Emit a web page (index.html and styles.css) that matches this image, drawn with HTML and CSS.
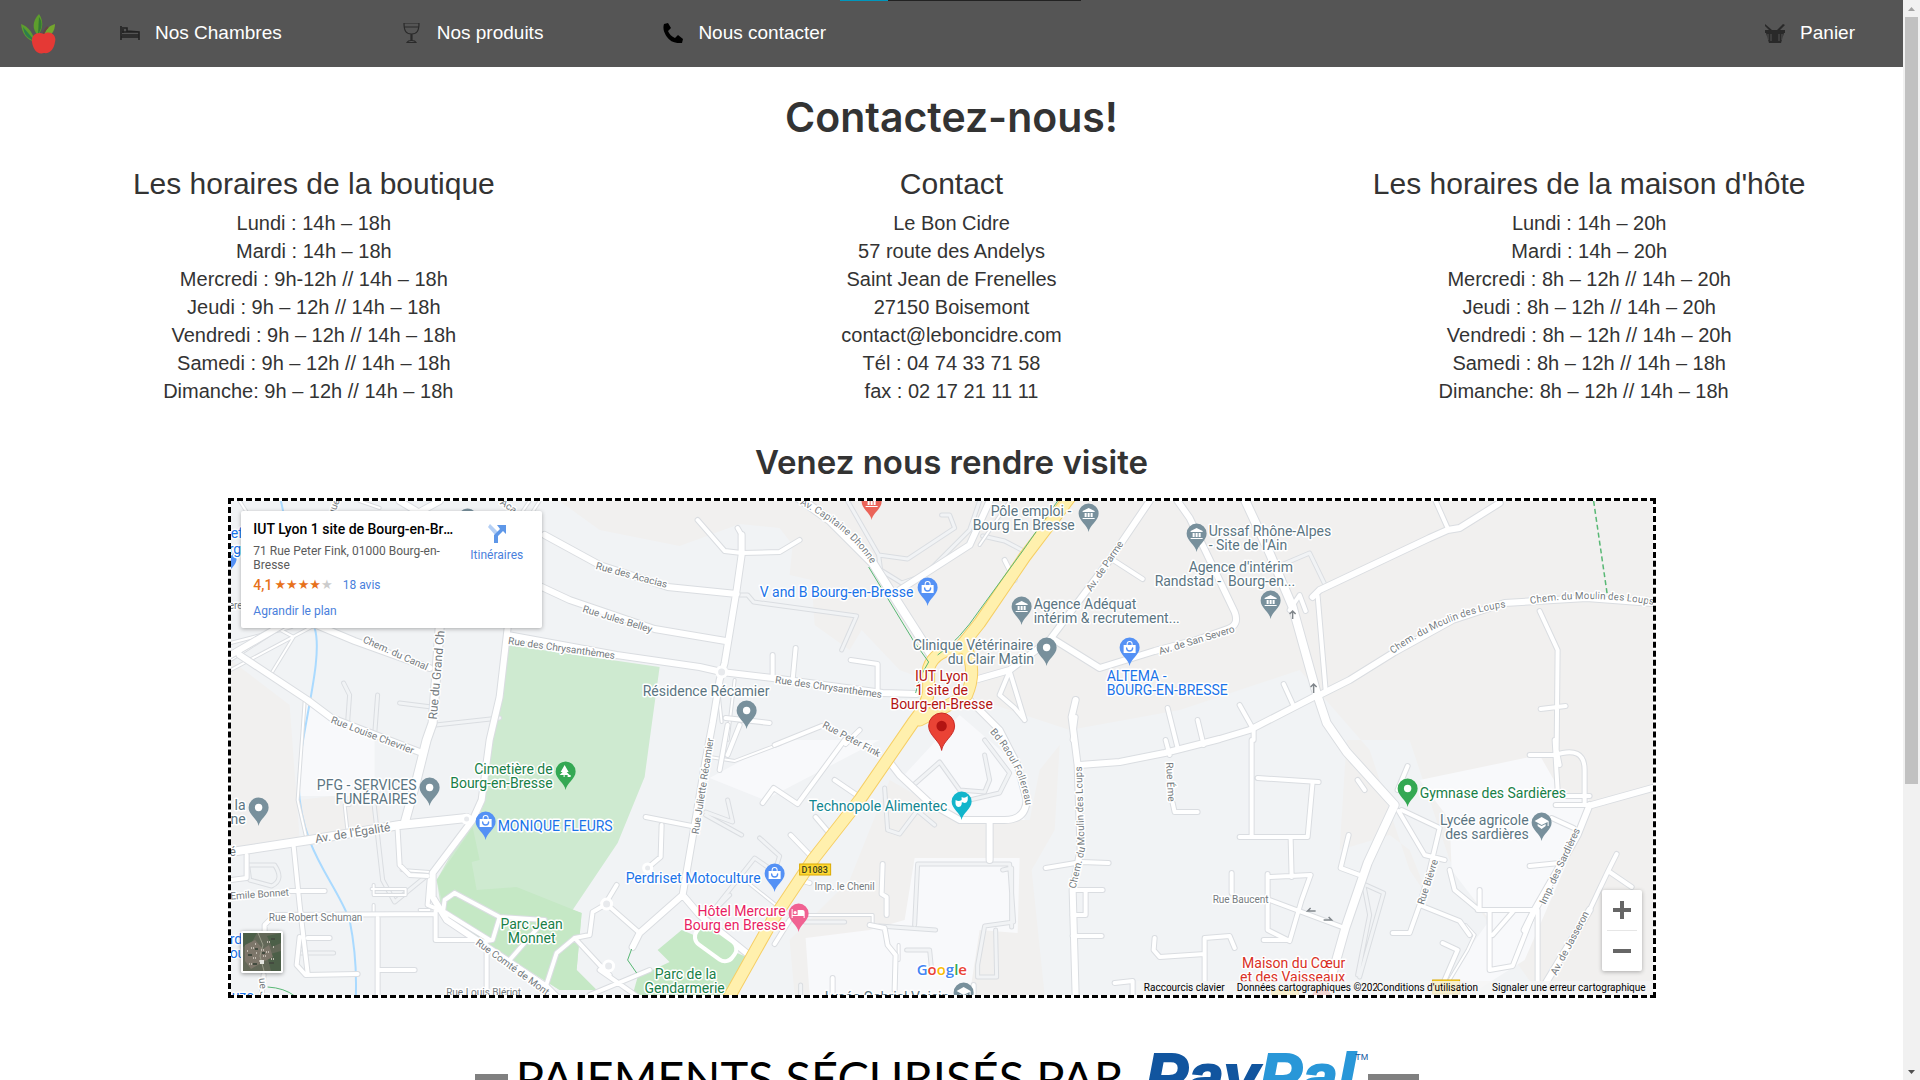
FILE: index.html
```
<!DOCTYPE html>
<html lang="fr">
<head>
<meta charset="utf-8">
<title>Le Bon Cidre - Contact</title>
<link rel="stylesheet" href="styles.css">
</head>
<body>
<div class="window">
<div class="page">
  <header class="header">
    <div class="loading"></div>
    <nav class="nav">
      <a class="logo" href="#" aria-label="Accueil">
        <svg width="36" height="42" viewBox="0 0 36 42"><path d="M19 1C12 8 12 17 18 22C24 15 23 7 19 1Z" fill="#5d9e2d"/><path d="M19 4L18 21C22 16 23 9 19 4Z" fill="#347a34"/><path d="M1 11C2 21 7 27 15 29C13 20 9 14 1 11Z" fill="#5d9e2d"/><path d="M3 14L15 28C8 26 4 22 3 14Z" fill="#2e7d4c"/><path d="M35 11C28 13 24 18 24 25C31 24 35 18 35 11Z" fill="#74a62e"/><path d="M23 22Q25 16 28 14" stroke="#644" stroke-width="2" fill="none"/><path d="M24 21C30 17 37 22 35 29C34 36 30 41 24 40C17 42 13 36 12 29C11 22 17 18 24 21Z" fill="#e53935"/></svg>
      </a>
      <a class="nav-link" href="#"><svg class="icon" viewBox="0 0 20 20" fill="none" stroke="#222" stroke-width="1.6"><path d="M1 3V17M1 14H19V17M19 14V9L7 8V5H2M2 9H19M2 12H19M3 6V10"/></svg>Nos Chambres</a>
      <a class="nav-link" href="#"><svg class="icon" viewBox="0 0 20 20" fill="none" stroke="#2a2a2a" stroke-width="1.2"><path d="M2 0H17C17 8 15 11 9.500 11S2 8 2 0ZM2 4H17M9 11V18M10 11V18M5 19.500Q6 17.500 9 17.500H10Q13 17.500 14 19.500Z"/></svg>Nos produits</a>
      <a class="nav-link" href="#"><svg class="icon" viewBox="0 0 20 20"><path d="M1 1L5 0L8 5L5 8Q7 13 12 15L15 12L20 16L19 20Q9 21 4 14Q-1 7 1 1Z"/></svg>Nous contacter</a>
      <a class="nav-link cart" href="#"><svg class="icon" viewBox="0 0 20 20" fill="#292929"><path d="M0 1L7 7H12L18 1L20 2L15 7H20V10H0V7H4L0 3Z"/><path d="M1 10H19L16 20H4Z"/><path d="M3 11V17M6 11V18M14 11V18M17 11V17" stroke="#555"/></svg>Panier</a>
    </nav>
  </header>
  <main>
    <h1 class="title">Contactez-nous!</h1>
    <div class="columns">
      <section class="column"><h3>Les horaires de la boutique</h3>
        <p>Lundi : 14h – 18h<br>Mardi : 14h – 18h<br>Mercredi : 9h-12h // 14h – 18h<br>Jeudi : 9h – 12h // 14h – 18h<br>Vendredi : 9h – 12h // 14h – 18h<br>Samedi : 9h – 12h // 14h – 18h<br>Dimanche: 9h – 12h // 14h – 18h&nbsp;&nbsp;</p></section>
      <section class="column"><h3>Contact</h3>
        <p>Le Bon Cidre<br>57 route des Andelys<br>Saint Jean de Frenelles<br>27150 Boisemont<br>contact@leboncidre.com<br>Tél : 04 74 33 71 58<br>fax : 02 17 21 11 11</p></section>
      <section class="column"><h3>Les horaires de la maison d'hôte</h3>
        <p>Lundi : 14h – 20h<br>Mardi : 14h – 20h<br>Mercredi : 8h – 12h // 14h – 20h<br>Jeudi : 8h – 12h // 14h – 20h<br>Vendredi : 8h – 12h // 14h – 20h<br>Samedi : 8h – 12h // 14h – 18h<br>Dimanche: 8h – 12h // 14h – 18h&nbsp;&nbsp;</p></section>
    </div>
    <h2 class="subtitle">Venez nous rendre visite</h2>
    <div class="map">
      <svg class="map-canvas" viewBox="231 501 1422 494" preserveAspectRatio="xMidYMid slice">
        <defs>
          <path id="drop" d="M0 0C-1-7 -10-11 -10-18.5A10 10 0 1 1 10-18.5C10-11 1-7 0 0Z"/>
          <g id="p-dot"><use href="#drop"/><circle cy="-18.500" r="3.700" fill="#fff"/></g>
          <g id="p-bag"><use href="#drop"/><path d="M-6-21H-3V-22A3 3 0 0 1 3-22V-21H6V-13H-6ZM-2-21H2V-22A2 2 0 0 0-2-22Z" fill="#fff"/><path d="M-3-18A3 3 0 0 0 3-18" fill="none" stroke="#5491f5" stroke-width="1.400"/></g>
          <g id="p-inst"><use href="#drop"/><path d="M-6-21L0-24L6-21V-20H-6ZM-4-19H-2V-15H-4ZM-1-19H1V-15H-1ZM2-19H4V-15H2ZM-6-14H6V-13H-6Z" fill="#fff"/></g>
          <g id="p-tree"><use href="#drop"/><path d="M-1-25L3-18H1L4-15H-1V-13H-2V-15H-6L-3-18H-5ZM2-15H5V-13H2Z" fill="#fff"/></g>
          <g id="p-bed"><use href="#drop"/><path d="M-7-23H-6V-17H-1V-22H4Q6-22 6-20V-14H5V-16H-6V-14H-7Z" fill="#fff"/><circle cx="-3.500" cy="-19.500" r="1.500" fill="#fff"/></g>
          <g id="p-mask"><use href="#drop"/><path d="M-6-20Q-3-18 0-20Q1-13-3-13T-6-20ZM0-23Q3-21 6-24Q7-17 3-17L0-18Z" fill="#fff"/></g>
          <g id="p-grad"><use href="#drop"/><path d="M-7-20L0-24L7-20V-15H6V-19L0-16ZM-4-17L0-15L4-17V-15L0-12L-4-15Z" fill="#fff"/></g>
          <g id="r-dim">
            <path d="M848 501L879 555L908 559L955 528L950 515H942M879 555L881 570L902 583L925 575L970 530L980 501M983 536L1005 541L1024 551M737 595L748 595L754 602L857 616L842 650M1277 567L1310 553L1326 586M706 812L733 822L728 800M706 815L742 835M760 838L780 856L775 872L755 858L710 915L730 895M885 788L888 830L900 834L918 810M915 784L940 762L960 790L985 792L990 780L985 755M985 740L1010 773L1000 793L970 800M917 810L935 825M915 925L918 864H1010L1014 922L985 926L978 965V977H997L996 930M880 926L936 930M805 922H845M907 950H930L932 970M1003 870L1012 868L1012 927M801 985V995M1364 884L1384 893L1360 977M1358 975L1370 915L1364 884"/>
            <path d="M344 683L350 695L348 722M378 695L375 735M400 703L432 707M436 725L500 718M300 953H334M248 865H275Q285 880 272 886L250 880ZM374 800L383 880L395 902L428 875"/>
          </g>
          <g id="r-thin">
            <path d="M240 501L265 540M231 660L300 615M231 670L325 620M231 643L292 627M281 630L294 637L272 673M305 702L298 800L306 835M350 805H345L348 832M320 513L350 527M360 501L380 508M530 501L510 530M540 501L520 532M718 685L722 722M735 680L728 740M1010 501L980 545M780 908L745 880M805 915H873V925M899 945V960M710 757L735 761L780 744M402 870L430 872V875"/>
            <path d="M374 905V915M372 889H406V895H374V885M420 910L430 910M1466 925L1475 935L1468 950L1450 980"/>
          </g>
          <g id="r-small">
            <path d="M698 520L725 551L742 553L780 552L800 540M738 528L742 535M773 678V655M793 680L796 648M851 660L878 664V691M726 718L770 723M728 725L720 770M740 725L728 755M822 726L775 745M846 744L860 730M763 803L774 788L798 804L845 740M835 780L857 795M816 817L833 837M791 835L817 862M646 817L692 826M662 825L661 857L648 868M1015 580L1005 560M1112 559L1143 579M1010 671L1000 695L1015 708L1025 720M1010 671L1025 720M1076 717L1073 740M1168 708L1178 748M1198 720L1204 745M1284 684L1294 706M1240 705L1254 730V740"/>
            <path d="M1166 740L1170 755M1252 740V780V837M1258 778L1319 782M1313 782L1308 837H1240M1291 838L1292 877M1268 874V930L1290 941L1302 900L1311 875L1270 877M1264 940H1290M1232 873V893M1270 900L1345 928M1349 835L1341 868L1360 875M1408 766L1398 790M1365 790L1358 780M1173 803L1175 812H1198M1046 868L1082 862L1109 863M1073 890H1103M1086 890V915H1073M1073 936H1102M1205 995V938L1230 936L1235 948M1155 938L1154 950L1160 957L1205 954M1115 983L1133 981V995M974 985L974 1000"/>
            <path d="M1399 811L1425 855L1445 860M1402 810L1440 828L1430 870L1420 905L1410 933H1393M1420 905L1460 921L1470 935M1530 755H1555Q1585 745 1585 770V805M1555 740L1558 790M1566 796H1590M1556 805H1592M1590 805L1578 835M1552 818L1574 828M1530 866L1560 863M1450 870L1455 890L1478 909M1480 890L1480 908M1478 910H1538V995M1490 910V970L1513 966L1535 910M1493 935L1513 912M1617 854L1608 872L1590 910M1610 872L1632 887M1443 943L1458 950L1445 980M1540 611L1558 650L1557 750M1541 709L1566 706M1436 501L1448 528M1306 611L1300 595L1290 610M1318 596L1326 690M1557 750L1560 765"/>
            <path d="M247 855V878L231 880M291 891H325M294 846L300 905L308 973M308 938H330M300 937L297 965L306 975L358 974M378 918V995M380 970H415M436 910V940H480M487 945V995M398 830L400 865L410 875L428 876M265 940V925L275 915L436 914M264 975L262 995M430 880L428 905L445 912L490 940M455 893L445 900L443 915M455 893L500 917L493 940L480 942M500 917L545 920L510 960M545 990L557 953L575 938L600 965L610 975M575 938L590 935L593 912L605 905M617 885L608 900M600 970L640 998M590 995L650 970M640 933L608 905M870 925L885 928L888 945L896 955L895 990M883 864L882 894L887 897V915M810 883L800 880M775 944L790 920M833 978V995"/>
          </g>
          <g id="r-main">
            <path d="M400 501L440 525M420 512L440 501M545 535L600 565L668 587L737 594M540 586L570 600L655 629L726 641M508 635L617 655L700 667L722 672L773 678L883 693L917 694M742 535V555L737 590L725 663L720 680L713 723L706 760L693 837L683 895L700 915L747 953M683 895L640 933L633 947M300 618L355 641L430 668M231 655L300 615M240 655L308 700L332 718L420 752M508 628L500 697L490 740L482 800L473 820L433 873L433 897L447 920L477 940L547 987L560 1000M1150 501L1110 560L1050 640M1178 501L1190 518L1235 612Q1240 625 1228 629L1197 640L1155 651L1100 668L1055 640M1050 640L1010 670L975 680M990 501L970 545L900 590M1320 695L1350 680L1395 652L1453 620L1505 603L1587 598L1653 603M1430 538L1320 590L1313 597M1430 538L1448 530L1460 528L1500 503"/>
            <path d="M970 700L1000 730L1018 765L1027 800Q1026 820 1005 820H960L930 803L900 775L890 762M1076 995L1073 890L1081 850L1078 765L1072 717L1076 700M1080 765L1120 762L1165 753L1220 739L1250 730L1318 695M990 820V860M1592 805L1653 788M1590 805L1578 835L1535 910L1525 930M1590 910L1545 985"/>
          </g>
          <g id="r-wide">
            <path d="M795 495L830 520L873 563L933 657M1243 495L1270 553L1293 607L1317 693L1327 723L1347 752L1395 805L1381 835L1368 863L1346 927L1333 973L1325 1000M440 628L437 670L433 723L427 740L417 780L405 823M225 853L310 840L400 825L467 818"/>
          </g>
          <g id="r-yellow">
            <path d="M1072 495L1025 557L980 623L960 648Q935 650 929 668V692Q927 706 913 723L860 800L813 860L773 920L728 1000M965 645Q978 670 967 695Q950 705 920 720"/>
          </g>
          <path id="t-dhonne" d="M800 504Q853 531 873 567"/>
          <path id="t-raoul" d="M990 732Q1020 765 1026 806"/>
          <path id="t-loups1" d="M1393 654Q1450 614 1508 607"/>
          <path id="t-loups2" d="M1531 604Q1590 593 1660 606"/>
          <path id="t-loups3" d="M1076 889L1085 850L1082 763"/>
        </defs>
        <rect x="231" y="501" width="1422" height="494" fill="#f1f3f5"/>
        <g fill="#f1f0ef">
          <path d="M231 501H560L600 530L680 546L740 524L780 528L793 545L790 575L812 580L815 625L850 650L862 630L900 670L980 700L1070 730L1180 710L1300 670L1370 750L1410 870L1430 900L1410 850L1390 835L1340 850L1347 740L1653 740V501Z"/>
          <path d="M231 660L290 705L300 838L231 850ZM300 800L380 790V832L306 835ZM1410 740H1653V995H1540L1480 910L1450 860ZM890 780L960 820L1030 820L1040 770L1060 745L1055 830L1032 870L1045 995H795L790 940L850 880Z"/>
        </g>
        <g fill="#f8f9fb">
          <path d="M306 700L340 722L375 740V796H300ZM710 778L780 740L880 740L765 800ZM960 715L1018 765L1025 820H960L900 780ZM915 858H1020L1018 933L980 930L970 995H810L806 938L870 930L905 920ZM1420 780L1540 755L1560 790L1590 800L1575 845L1525 960L1470 995L1440 990L1490 920L1452 870L1450 820Z"/>
        </g>
        <path d="M508 645L660 667L650 740L645 777L618 843L573 910L582 913L577 970L597 990H560L443 917L437 880L467 827L483 807L493 740Z" fill="#ceead0"/>
        <path d="M437 880L473 827L480 860L472 862L477 890L517 887L582 913L577 970L597 990H560L447 918Z" fill="#c5e8c5"/>
        <path d="M658 950L682 930L747 957L725 995H633L638 977L670 962Z" fill="#c5e8c5"/>
        <path d="M280 495C290 540 300 600 315 628C325 660 298 740 299 785C301 850 335 880 350 920Q358 960 356 1000" fill="none" stroke="#aadaff" stroke-width="2"/>
        <use href="#r-dim" class="case w5"/><use href="#r-dim" class="dim w3"/>
        <use href="#r-thin" class="case w4"/><use href="#r-thin" class="road w2"/>
        <use href="#r-small" class="case w6"/><use href="#r-main" class="case w8"/><use href="#r-wide" class="case w10"/>
        <use href="#r-small" class="road w4"/><use href="#r-main" class="road w6"/><use href="#r-wide" class="road w8"/>
        <use href="#r-yellow" class="gold w13"/><use href="#r-yellow" class="yellow w11"/>
        <g class="ring"><circle cx="722" cy="672" r="5"/><circle cx="467" cy="819" r="4"/><circle cx="648" cy="868" r="4"/><circle cx="607" cy="904" r="5"/><circle cx="609" cy="966" r="5"/></g>
        <rect class="loop" x="694" y="932" width="44" height="22" rx="9" transform="rotate(36 716 943)"/>
        <path d="M869 567L914 641L929 662L920 678L916 693M938 655Q960 640 980 610L1023 551L1058 501M632 949L628 960L637 973M268 987Q285 988 295 996" fill="none" stroke="#58b874"/>
        <path d="M1594 501L1608 597" fill="none" stroke="#58b874" stroke-width="1.500" stroke-dasharray="5 3"/>
        <g stroke="#80868b" stroke-width="1.500" fill="none"><path d="M1293 619V611M1290 614L1293 611L1296 614M1314 693V684M1311 687L1314 684L1317 687M1316 911H1308L1311 908M1324 920H1332L1329 917"/></g>
        <g fill="#fdd835" stroke="#dba900"><rect x="800" y="864" width="31" height="11"/><rect x="1433" y="980" width="27" height="14"/><rect x="1272" y="990" width="27" height="14"/></g>
        <g class="street">
          <text transform="translate(632 575) rotate(15)">Rue des Acacias</text><text transform="translate(618 619) rotate(17)">Rue Jules Belley</text>
          <text transform="translate(562 648) rotate(8)">Rue des Chrysanthèmes</text><text transform="translate(829 687) rotate(8)">Rue des Chrysanthèmes</text>
          <text transform="translate(396 653) rotate(24)">Chem. du Canal</text><text transform="translate(373 735) rotate(21)">Rue Louise Chevrier</text>
          <text x="316" y="917">Rue Robert Schuman</text><text transform="translate(260 894) rotate(-4)">Emile Bonnet</text><text x="484" y="992">Rue Louis Blériot</text>
          <text transform="translate(513 967) rotate(36)">Rue Comté de Mont</text><text transform="translate(703 786) rotate(-81)">Rue Juliette Récamier</text>
          <text transform="translate(852 739) rotate(28)">Rue Peter Fink</text><text x="845" y="886">Imp. le Chenil</text>
          <text transform="translate(1105 566) rotate(-56)">Av. de Parme</text><text transform="translate(1197 640) rotate(-17)">Av. de San Severo</text>
          <text transform="translate(1171 782) rotate(87)">Rue Éme</text><text x="1241" y="899">Rue Baucent</text>
          <text transform="translate(1428 882) rotate(-72)">Rue Bièvre</text><text transform="translate(1560 866) rotate(-65)">Imp. des Sardières</text>
          <text transform="translate(1570 943) rotate(-62)">Av. de Jasseron</text><text transform="translate(509 506) rotate(36)">Aca</text><text transform="translate(334 507) rotate(-70)">que</text>
          <text x="236" y="605">ere</text><text transform="translate(264 990) rotate(85)">ue Je</text>
          <text class="large" transform="translate(353 833) rotate(-9)">Av. de l'Égalité</text><text class="large" transform="translate(437 675) rotate(-85)">Rue du Grand Ch</text><text class="large" x="233" y="852">é</text>
        </g>
        <g class="street curved">
          <text><textPath href="#t-dhonne">Av. Capitaine Dhonne</textPath></text><text><textPath href="#t-raoul">Bd Raoul Follereau</textPath></text>
          <text><textPath href="#t-loups1">Chem. du Moulin des Loups</textPath></text><text><textPath href="#t-loups2">Chem. du Moulin des Loups</textPath></text><text><textPath href="#t-loups3">Chem. du Moulin des Loups</textPath></text>
        </g>
        <text class="shield" x="815" y="873">D1083</text>
        <g fill="#78909c">
          <use href="#p-inst" x="1089" y="532"/><use href="#p-inst" x="1197" y="552"/><use href="#p-inst" x="1271" y="619"/><use href="#p-inst" x="1022" y="625"/>
          <use href="#p-dot" x="1047" y="666"/><use href="#p-dot" x="747" y="729"/><use href="#p-dot" x="430" y="806"/><use href="#p-dot" x="259" y="826"/><use href="#p-dot" x="468" y="537"/>
          <use href="#p-grad" x="1542" y="841"/><use href="#p-grad" x="964" y="1011"/>
        </g>
        <g fill="#5491f5"><use href="#p-bag" x="928" y="606"/><use href="#p-bag" x="1130" y="666"/><use href="#p-bag" x="486" y="840"/><use href="#p-bag" x="775" y="892"/><use href="#p-dot" x="227" y="577"/></g>
        <g fill="#34a853"><use href="#p-tree" x="566" y="790"/><use href="#p-dot" x="1408" y="807"/></g>
        <use href="#p-inst" x="872" y="520" fill="#eb6459"/><use href="#p-bed" x="799" y="932" fill="#f06292"/><use href="#p-mask" x="962" y="820" fill="#12b5cb"/><circle cx="1322" cy="998" r="10" fill="#eb6459"/>
        <g transform="translate(942 750) scale(1.3)"><use href="#drop" fill="#ea4335" stroke="#c5221f" stroke-width=".7"/><circle cy="-18.500" r="4" fill="#b31412"/></g>
        <g class="place">
          <g class="slate"><text x="991" y="516">Pôle emploi -</text><text x="973" y="530">Bourg En Bresse</text><text x="1209" y="536">Urssaf Rhône-Alpes</text><text x="1209" y="550">- Site de l'Ain</text>
            <text x="1189" y="572">Agence d'intérim</text><text x="1155" y="586">Randstad -&#160; Bourg-en...</text><text x="1034" y="609">Agence Adéquat</text><text x="1034" y="623">intérim &amp; recrutement...</text>
            <text x="913" y="650">Clinique Vétérinaire</text><text x="948" y="664">du Clair Matin</text><text x="643" y="696">Résidence Récamier</text><text class="end" x="417" y="790">PFG - SERVICES</text><text class="end" x="417" y="804">FUNÉRAIRES</text>
            <text class="end" x="246" y="810">la</text><text class="end" x="246" y="824">ne</text><text class="end" x="1529" y="825">Lycée agricole</text><text class="end" x="1529" y="839">des sardières</text><text x="825" y="1002">Lycée Gabriel Voisin</text></g>
          <g class="blue"><text x="760" y="597">V and B Bourg-en-Bresse</text><text x="1107" y="681">ALTEMA -</text><text x="1107" y="695">BOURG-EN-BRESSE</text><text x="498" y="831">MONIQUE FLEURS</text><text x="626" y="883">Perdriset Motoculture</text><text x="231" y="538">ef</text><text x="229" y="554">rg</text><text x="230" y="944">rd</text><text x="230" y="958">ou</text><text x="232" y="1001">uzo</text></g>
          <g class="green"><text class="end" x="553" y="774">Cimetière de</text><text class="end" x="553" y="788">Bourg-en-Bresse</text><text class="mid" x="532" y="929">Parc Jean</text><text class="mid" x="532" y="943">Monnet</text><text class="mid" x="686" y="979">Parc de la</text><text class="mid" x="685" y="993">Gendarmerie</text><text x="1420" y="798">Gymnase des Sardières</text></g>
          <g class="deep-red"><text class="mid" x="942" y="681">IUT Lyon</text><text class="mid" x="942" y="695">1 site de</text><text class="mid" x="942" y="709">Bourg-en-Bresse</text></g>
          <text class="teal" x="809" y="811">Technopole Alimentec</text>
          <g class="pink"><text class="end" x="786" y="916">Hôtel Mercure</text><text class="end" x="786" y="930">Bourg en Bresse</text></g>
          <g class="red"><text class="mid" x="1294" y="968">Maison du Cœur</text><text class="mid" x="1293" y="982">et des Vaisseaux</text></g>
        </g>
        <text class="google" x="917" y="975"><tspan fill="#4285f4">G</tspan><tspan fill="#ea4335">o</tspan><tspan fill="#fbbc04">o</tspan><tspan fill="#4285f4">g</tspan><tspan fill="#34a853">l</tspan><tspan fill="#ea4335">e</tspan></text>
      </svg>
      <div class="card">
        <div class="card-info">
          <div class="card-name">IUT Lyon 1 site de Bourg-en-Bresse</div>
          <div class="card-address">71 Rue Peter Fink, 01000 Bourg-en-Bresse</div>
          <div class="rating"><b>4,1</b><span class="stars">★★★★<i>★</i></span><a href="#">18 avis</a></div>
          <a href="#">Agrandir le plan</a>
        </div>
        <a class="directions" href="#"><svg width="20" height="20" viewBox="0 0 20 20"><path d="M1 4L3 1L12 10L9 13Z" fill="#b4cff5"/><path d="M7 20V12L13 6L10 2H19V11L16 8L11 13V20Z" fill="#5e97e8"/></svg>Itinéraires</a>
      </div>
      <button class="satellite" aria-label="Afficher les images satellite"><svg width="38" height="38" viewBox="0 0 38 38"><rect width="38" height="38" fill="#636858"/><path d="M0 0H14L9 9L0 14ZM24 3L38 0V10L29 14ZM24 22L38 18V38H28Z" fill="#4c5f48"/><path d="M2 12L12 7L20 16L26 12L30 24L20 29L8 36L2 28Z" fill="#7d766a"/><path d="M15 0L20 12L17 23L21 38" stroke="#9a9c8a" fill="none"/><path d="M4 18h2M8 15h3M13 20h2M18 17h4M23 19h3M10 25h3M16 28h2M24 9h3M30 14h2M6 31h3M20 23h3M28 26h3M12 11h2" stroke="#c0bab0" stroke-width="2" stroke-dasharray="1 1"/><path d="M17 27h4v4h-4z" fill="#e4e4df"/><path d="M5 22h4M12 16h3M19 20h3M26 30h5M10 31h4M28 6h4" stroke="#434b3f" stroke-width="2"/></svg></button>
      <div class="zoom"><button aria-label="Zoom avant"><svg width="18" height="18"><path d="M0 9H18M9 0V18" stroke="#666" stroke-width="4"/></svg></button><button aria-label="Zoom arrière"><svg width="18" height="18"><path d="M0 9H18" stroke="#666" stroke-width="4"/></svg></button></div>
      <div class="credits"><button>Raccourcis clavier</button><span>Données cartographiques ©2023</span><a href="#">Conditions d'utilisation</a><a class="report" href="#">Signaler une erreur cartographique</a></div>
    </div>
    <div class="payments"><span class="rule"></span><span>PAIEMENTS SÉCURISÉS PAR</span><span class="paypal">Pay<em>Pal</em><sup>TM</sup></span><span class="rule last"></span></div>
  </main>
</div>
<div class="scrollbar"><svg width="17" height="17"><path d="M5 11L8.500 7L12 11Z" fill="#a3a3a3"/></svg><div class="thumb"></div><svg width="17" height="17"><path d="M5 7L8.500 11L12 7Z" fill="#505050"/></svg></div>
</div>
</body>
</html>
```
FILE: styles.css
```
* { box-sizing: border-box; }
body { margin: 0; background: #fff; color: #333; font: 20px/28px "Liberation Sans", Arial, sans-serif; }
a { text-decoration: none; color: inherit; }
button { border: 0; padding: 0; background: none; font: inherit; color: inherit; }
h1, h2, h3, p { margin: 0; }

.window { display: flex; height: 100vh; overflow: hidden; }
.page { flex: 1; min-width: 0; overflow: hidden; }
.scrollbar { flex: none; width: 17px; background: #f1f1f1; display: flex; flex-direction: column; justify-content: space-between; }
.scrollbar svg { display: block; flex: none; }
.thumb { width: 13px; height: 71%; margin: 0 2px auto; background: #c1c1c1; }

.header { position: relative; background: #555; }
.loading { position: absolute; top: 0; left: 840px; width: 241px; height: 1px; background: linear-gradient(to right, #0097bd 20%, #222 20%); }
.nav { display: flex; align-items: center; gap: 120px; height: 67px; padding: 0 48px 2px 20px; font-size: 19px; color: #fff; }
.logo { display: flex; margin-right: -56px; padding-top: 2px; }
.nav-link { display: flex; align-items: center; gap: 15px; }
.icon { width: 20px; height: 20px; }
.cart { margin-left: auto; }

.title, .subtitle { text-align: center; font-family: Inter, sans-serif; font-weight: 600; }
.title { margin: 27px 0; font-size: 41px; line-height: 46px; }
.subtitle { margin: 37px 0 16px; font-size: 33px; line-height: 40px; }
.columns { display: flex; margin: 0 -5px; text-align: center; }
.column { flex: 1; }
.column h3 { margin-bottom: 8px; font-size: 30px; line-height: 34px; font-weight: 400; }

.map { position: relative; width: 75%; height: 500px; margin-left: 12%; border: 3px dashed #000; overflow: hidden; font-family: Roboto, sans-serif; }
.map-canvas { display: block; width: 100%; height: 100%; }
.map-canvas use { stroke-linecap: round; stroke-linejoin: round; }
.case, .road, .dim, .gold, .yellow { fill: none; }
.case { stroke: #dadde1; }
.road { stroke: #fff; }
.dim { stroke: #f1f3f5; }
.gold { stroke: #f6cf65; }
.yellow { stroke: #fff0ad; }
.w2 { stroke-width: 2px; }
.w3 { stroke-width: 3px; }
.w4 { stroke-width: 4px; }
.w5 { stroke-width: 5px; }
.w6 { stroke-width: 6px; }
.w8 { stroke-width: 8px; }
.w10 { stroke-width: 10px; }
.w11 { stroke-width: 11px; }
.w13 { stroke-width: 13px; }
.ring { fill: #e8eaed; stroke: #fff; stroke-width: 3px; }
.loop { fill: #c5e8c5; stroke: #fff; stroke-width: 4px; }
.map-canvas text { paint-order: stroke; stroke: #fff; stroke-width: 3px; stroke-linejoin: round; }
.street { font-size: 10px; fill: #757b80; text-anchor: middle; dominant-baseline: central; }
.street .large { font-size: 12px; }
.curved { text-anchor: start; dominant-baseline: auto; }
.map-canvas .shield { font-size: 9px; font-weight: 500; fill: #40401f; stroke: none; text-anchor: middle; }
.place { font-size: 14px; }
.end { text-anchor: end; }
.mid { text-anchor: middle; }
.slate { fill: #5b7582; }
.blue { fill: #1a73e8; }
.green { fill: #188047; }
.deep-red { fill: #b31412; }
.red { fill: #d93025; }
.teal { fill: #128691; }
.pink { fill: #e91e63; }
.google { font: 600 15px "Open Sans", sans-serif; }

.card { position: absolute; top: 10px; left: 10px; display: flex; width: 301px; height: 117px; padding: 10px 12px; background: #fff; border-radius: 2px; box-shadow: 0 1px 4px rgba(0, 0, 0, .3); font-size: 12px; line-height: 14px; color: #5b5b5b; }
.card a { color: #4a7fdc; }
.card-info { width: 200px; }
.card-name { overflow: hidden; white-space: nowrap; text-overflow: ellipsis; color: #000; font-size: 14px; line-height: 16px; font-weight: 500; }
.card-address { margin-top: 7px; width: 190px; }
.rating { display: flex; align-items: center; margin: 6px 0 12px; }
.rating b { color: #e7711b; font-size: 14px; font-weight: 500; }
.stars { margin: 0 10px 0 2px; font: 13px/14px "DejaVu Sans", sans-serif; color: #e7711b; }
.stars i { color: #ccc; font-style: normal; }
.directions { display: flex; flex-direction: column; align-items: center; gap: 5px; margin: 2px 0 0 17px; }

.satellite { position: absolute; left: 10px; bottom: 22px; width: 42px; height: 42px; border: 2px solid #fff; border-radius: 2px; box-shadow: 0 1px 4px rgba(0, 0, 0, .4); }
.satellite svg { display: block; }
.zoom { position: absolute; right: 11px; bottom: 24px; width: 40px; padding: 0 5px; background: #fff; border-radius: 2px; box-shadow: 0 1px 4px rgba(0, 0, 0, .3); }
.zoom button { display: flex; align-items: center; justify-content: center; width: 30px; height: 40px; }
.zoom button + button { border-top: 1px solid #e6e6e6; height: 41px; }
.credits { position: absolute; right: 0; bottom: 0; display: flex; background: rgba(245, 245, 245, .8); color: #000; font-size: 10px; line-height: 14px; white-space: nowrap; padding: 0 7px; }
.credits span { width: 140px; margin-left: 12px; overflow: hidden; }
.credits .report { margin-left: 14px; }

.payments { display: flex; align-items: center; justify-content: center; height: 70px; margin-top: 44px; padding-right: 9px; color: #000; font-family: Lato, sans-serif; font-size: 47px; white-space: nowrap; }
.rule { width: 33px; height: 7px; margin-right: 8px; background: #808080; }
.rule.last { width: 51px; margin: 0; }
.paypal { display: flex; align-items: center; margin-left: 22px; color: #11559f; font: italic 800 64px/70px "Liberation Sans", sans-serif; -webkit-text-stroke: 2px; }
.paypal em { color: #2997d8; }
.paypal sup { align-self: flex-start; font: 9px/12px "Liberation Sans", sans-serif; margin-top: 9px; -webkit-text-stroke: 0; }
```
